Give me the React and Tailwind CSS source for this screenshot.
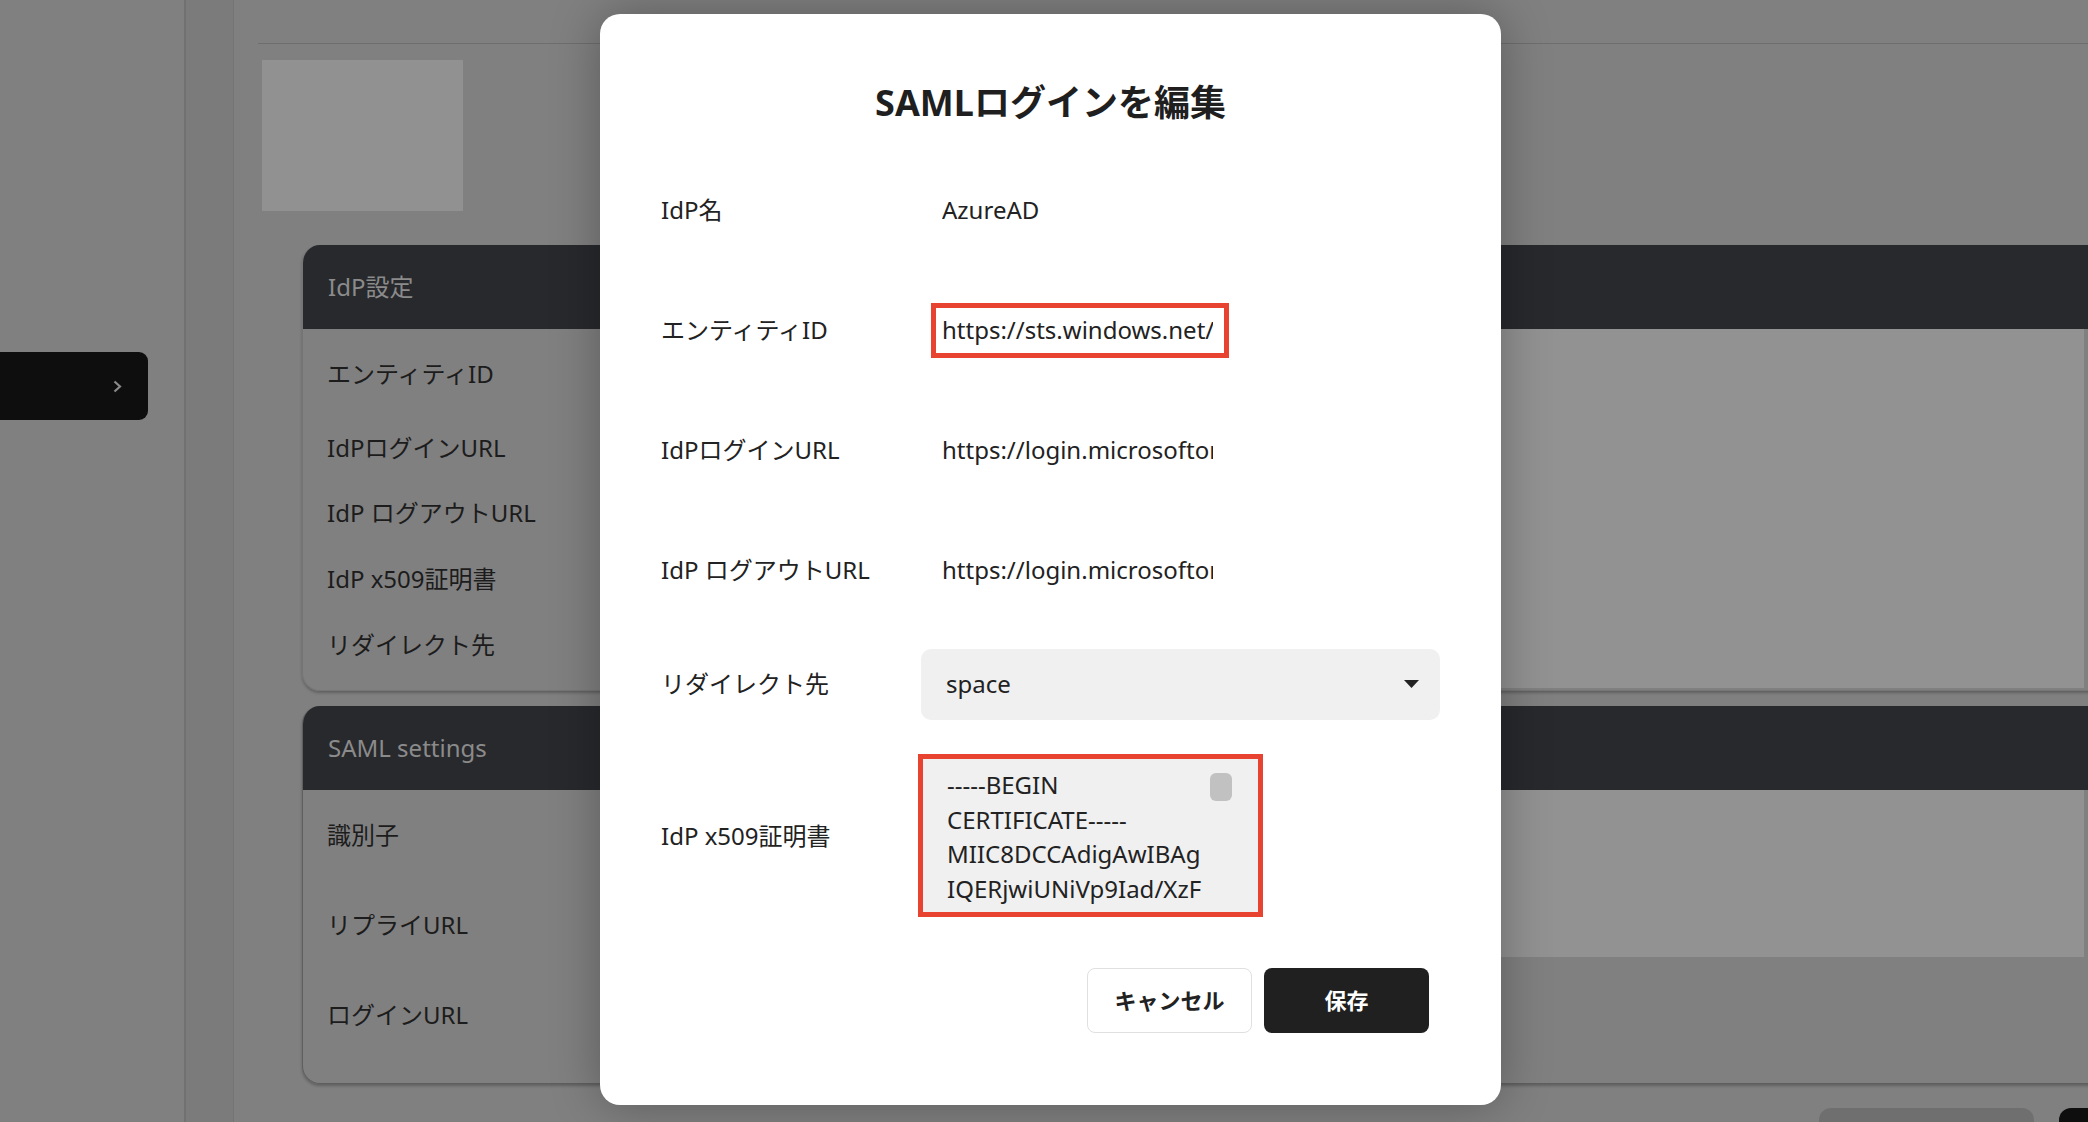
import React from 'react'

// SAMLログイン編集モーダル(背景は設定画面、オーバーレイ済みの色で描画)

const FONT = "font-['Noto_Sans','Noto_Sans_CJK_JP',sans-serif]"

function ValueInput({ value, highlight = false }) {
  return (
    <div
      className={`ml-[13px] w-[298px] h-[55px] border-[5px] ${highlight ? 'border-[#e84330]' : 'border-transparent'}`}
    >
      <input
        readOnly
        value={value}
        className="w-full h-full pl-[6px] pr-[11px] pb-[2px] bg-transparent outline-none text-[24px] text-[#222]"
      />
    </div>
  )
}

function Row({ label, children, className = 'h-[120px]' }) {
  return (
    <div className={`flex items-center ${className}`}>
      <span className="w-[257px] shrink-0 text-[24px] text-[#222]">{label}</span>
      {children}
    </div>
  )
}

function EditSamlModal() {
  return (
    <div className="absolute left-[600px] top-[14px] w-[901px] h-[1091px] rounded-[20px] bg-white shadow-[0_0_50px_rgba(0,0,0,0.3)] pl-[61px] pr-[61px] pt-[63px] flex flex-col text-[#222]">
      <h2 className="text-center text-[36px] font-bold leading-[52px] text-[#1f1f1f]">SAMLログインを編集</h2>

      <div className="mt-[21px] flex flex-col">
        <Row label="IdP名">
          <ValueInput value="AzureAD" />
        </Row>
        <Row label="エンティティID">
          <ValueInput value="https://sts.windows.net/" highlight />
        </Row>
        <Row label="IdPログインURL">
          <ValueInput value="https://login.microsoftonline.com/saml2" />
        </Row>
        <Row label="IdP ログアウトURL">
          <ValueInput value="https://login.microsoftonline.com/saml2" />
        </Row>

        <Row label="リダイレクト先" className="h-[108px]">
          <div className="ml-[3px] w-[519px] h-[71px] rounded-[10px] bg-[#f0f0f0] flex items-center justify-between pl-[25px] pr-[21px]">
            <span className="text-[24px]">space</span>
            <svg width="15" height="8" viewBox="0 0 15 8" aria-hidden>
              <path d="M0 0h15L7.5 8z" fill="#222" />
            </svg>
          </div>
        </Row>

        <Row label="IdP x509証明書" className="mt-[16px] h-[163px]">
          <div className="relative w-[345px] h-[163px] border-[5px] border-[#e84330] bg-[#f0f0f0] overflow-hidden pl-[24px] pt-[9px] text-[24px] leading-[34.5px] text-[#222]">
            <div>-----BEGIN</div>
            <div>CERTIFICATE-----</div>
            <div>MIIC8DCCAdigAwIBAg</div>
            <div>IQERjwiUNiVp9Iad/XzF</div>
            <div className="absolute left-[287px] top-[14px] w-[22px] h-[28px] rounded-[6px] bg-[#c1c1c1]" />
          </div>
        </Row>
      </div>

      <div className="mt-[51px] flex justify-end gap-[12px] pr-[11px]">
        <button
          type="button"
          className="w-[165px] h-[65px] rounded-[8px] border border-[#e0e0e0] bg-white text-[22px] font-bold text-[#222]"
        >
          キャンセル
        </button>
        <button type="button" className="w-[165px] h-[65px] rounded-[8px] bg-[#202020] text-[22px] font-bold text-white">
          保存
        </button>
      </div>
    </div>
  )
}

export default function App() {
  return (
    <div className={`relative w-[2088px] h-[1122px] overflow-hidden bg-[#808080] flex ${FONT}`}>
      {/* サイドバー */}
      <div className="w-[184px] shrink-0 flex flex-col">
        <div className="mt-[352px] w-[148px] h-[68px] bg-[#0e0e0e] rounded-r-[9px] flex items-center justify-end pr-[26px]">
          <svg width="9" height="13" viewBox="0 0 9 13" aria-hidden>
            <path d="M1.5 1.5L7 6.5L1.5 11.5" fill="none" stroke="#8a8a8a" strokeWidth="2.2" />
          </svg>
        </div>
      </div>
      <div className="w-[50px] shrink-0 bg-[#7b7b7b] border-l-2 border-l-[#717171] border-r border-r-[#747474]" />

      {/* メイン */}
      <div className="flex-1 min-w-0 flex flex-col">
        <div className="ml-[24px] h-[44px] shrink-0 border-b border-[#6e6e6e]" />
        <div className="ml-[28px] mt-[16px] w-[201px] h-[151px] shrink-0 bg-[#919191]" />

        <div className="ml-[68px] mt-[34px] w-[1900px] shrink-0 rounded-[18px] border-x border-b border-[#757575] shadow-[0_2px_3px_rgba(0,0,0,0.25)] overflow-hidden">
          <div className="h-[84px] bg-[#28292d] flex items-center pl-[25px] text-[24px] text-[#8b8b8b]">IdP設定</div>
          <div className="flex h-[361px]">
            <div className="w-[797px] shrink-0 pl-[24px] pt-[28px] flex flex-col text-[24px] leading-[34px] text-[#1c1c1c]">
              <span>エンティティID</span>
              <span className="mt-[40px]">IdPログインURL</span>
              <span className="mt-[31px]">IdP ログアウトURL</span>
              <span className="mt-[32px]">IdP x509証明書</span>
              <span className="mt-[32px]">リダイレクト先</span>
            </div>
            <div className="w-[984px] h-[359px] shrink-0 bg-[#929292]" />
          </div>
        </div>

        <div className="ml-[68px] mt-[15px] w-[1900px] shrink-0 rounded-[18px] border-x border-b border-[#5f5f5f] shadow-[0_2px_3px_rgba(0,0,0,0.25)] overflow-hidden">
          <div className="h-[84px] bg-[#28292d] flex items-center pl-[25px] text-[24px] text-[#8b8b8b]">SAML settings</div>
          <div className="flex h-[293px]">
            <div className="w-[797px] shrink-0 pl-[24px] pt-[28px] flex flex-col text-[24px] leading-[34px] text-[#1c1c1c]">
              <span>識別子</span>
              <span className="mt-[56px]">リプライURL</span>
              <span className="mt-[56px]">ログインURL</span>
            </div>
            <div className="w-[984px] h-[167px] shrink-0 bg-[#929292]" />
          </div>
        </div>

        <div className="mt-[24px] pl-[1585px] flex gap-[25px] shrink-0">
          <div className="w-[215px] h-[60px] shrink-0 rounded-[12px] bg-[#6f6f6f]" />
          <div className="w-[215px] h-[60px] shrink-0 rounded-[12px] bg-[#0e0e0e]" />
        </div>
      </div>

      <EditSamlModal />
    </div>
  )
}
